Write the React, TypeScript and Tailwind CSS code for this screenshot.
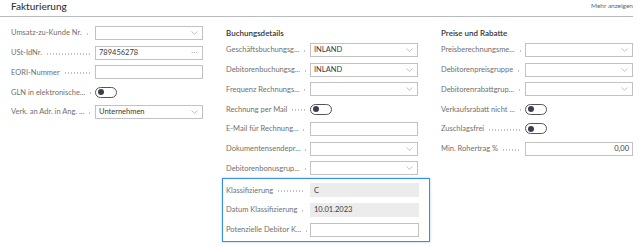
import type { ReactNode } from "react";

type Control =
  | { kind: "select"; value?: string }
  | { kind: "text"; value?: string; align?: "right" }
  | { kind: "lookup"; value: string }
  | { kind: "toggle" }
  | { kind: "readonly"; value: string };

type Field = { label: string; control: Control };

const left: Field[] = [
  { label: "Umsatz-zu-Kunde Nr.", control: { kind: "select" } },
  { label: "USt-IdNr.", control: { kind: "lookup", value: "789456278" } },
  { label: "EORI-Nummer", control: { kind: "text" } },
  { label: "GLN in elektronische...", control: { kind: "toggle" } },
  { label: "Verk. an Adr. in Ang. ...", control: { kind: "select", value: "Unternehmen" } },
];

const middle: Field[] = [
  { label: "Geschäftsbuchungsg...", control: { kind: "select", value: "INLAND" } },
  { label: "Debitorenbuchungsg...", control: { kind: "select", value: "INLAND" } },
  { label: "Frequenz Rechnungs...", control: { kind: "select" } },
  { label: "Rechnung per Mail", control: { kind: "toggle" } },
  { label: "E-Mail für Rechnung...", control: { kind: "text" } },
  { label: "Dokumentensendepr...", control: { kind: "select" } },
  { label: "Debitorenbonusgrup...", control: { kind: "select" } },
];

const highlighted: Field[] = [
  { label: "Klassifizierung", control: { kind: "readonly", value: "C" } },
  { label: "Datum Klassifizierung", control: { kind: "readonly", value: "10.01.2023" } },
  { label: "Potenzielle Debitor K...", control: { kind: "text" } },
];

const right: Field[] = [
  { label: "Preisberechnungsme...", control: { kind: "select" } },
  { label: "Debitorenpreisgruppe", control: { kind: "select" } },
  { label: "Debitorenrabattgrup...", control: { kind: "select" } },
  { label: "Verkaufsrabatt nicht ...", control: { kind: "toggle" } },
  { label: "Zuschlagsfrei", control: { kind: "toggle" } },
  { label: "Min. Rohertrag %", control: { kind: "text", value: "0,00", align: "right" } },
];

function Chevron() {
  return (
    <svg width="7" height="4" viewBox="0 0 7 4" className="shrink-0">
      <path d="M0.5 0.5 L3.5 3.3 L6.5 0.5" fill="none" stroke="#a8a8a8" strokeWidth="0.7" />
    </svg>
  );
}

function Box({ children, className = "" }: { children?: ReactNode; className?: string }) {
  return (
    <div
      className={`w-[109px] h-[14px] border border-[#c2c2c2] bg-white flex items-center px-[3px] text-[7.5px] text-[#3a3a3a] ${className}`}
    >
      {children}
    </div>
  );
}

function ControlView({ control }: { control: Control }) {
  switch (control.kind) {
    case "select":
      return (
        <Box className="justify-between pr-[4px]">
          <span>{control.value ?? ""}</span>
          <Chevron />
        </Box>
      );
    case "lookup":
      return (
        <Box className="justify-between pr-[4px]">
          <span>{control.value}</span>
          <span className="text-[#888] tracking-[0.5px] leading-none -mt-[3px]">...</span>
        </Box>
      );
    case "text":
      return (
        <Box className={control.align === "right" ? "justify-end" : ""}>
          <span>{control.value ?? ""}</span>
        </Box>
      );
    case "readonly":
      return (
        <div className="w-[109px] h-[14px] bg-[#ececec] flex items-center px-[4px] text-[7.5px] text-[#3a3a3a]">
          {control.value}
        </div>
      );
    case "toggle":
      return (
        <div className="w-[22px] h-[11px] rounded-full border border-[#555] flex items-center pl-[2px]">
          <div className="w-[6px] h-[6px] rounded-full bg-[#3a3f4a]" />
        </div>
      );
  }
}

function Row({ field }: { field: Field }) {
  return (
    <div className="h-[19.75px] flex items-center">
      <div className="w-[84px] flex items-center pr-[5px] shrink-0">
        <span className="text-[7.5px] text-[#707070] whitespace-nowrap">{field.label}</span>
        <div className="flex-1 ml-[4px] mt-[2px] h-[2px] min-w-[2px] bg-[radial-gradient(circle,#c4c4c4_35%,transparent_45%)] bg-[length:3px_2px] bg-repeat-x" />
      </div>
      <ControlView control={field.control} />
    </div>
  );
}

function GroupTitle({ children }: { children: ReactNode }) {
  return (
    <div className="h-[17px] flex items-center text-[8px] font-semibold text-[#333] pt-[3px]">
      {children}
    </div>
  );
}

export default function App() {
  return (
    <div
      className="w-[638px] h-[247px] bg-white overflow-hidden"
      style={{ fontFamily: "Lato, 'Open Sans', sans-serif" }}
    >
      {/* Section header */}
      <div className="h-[17px] mr-[5px] border-b border-[#b8bcc2] flex items-center justify-between pl-[11px]">
        <span className="text-[10px] text-[#333] font-medium -mt-[3px]">Fakturierung</span>
        <span className="text-[6.5px] text-[#666] -mt-[4px]">Mehr anzeigen</span>
      </div>

      <div className="grid grid-cols-[192px_192px_192px] gap-x-[23px] pl-[11px] pt-[6px]">
        <div className="flex flex-col">
          {left.map((f) => (
            <Row key={f.label} field={f} />
          ))}
        </div>

        <div className="flex flex-col">
          <GroupTitle>Buchungsdetails</GroupTitle>
          {middle.map((f) => (
            <Row key={f.label} field={f} />
          ))}
          <div className="-ml-[4px] w-[208px] border-[1.5px] border-[#3a8ee6] shadow-[0_0_2px_rgba(58,142,230,0.5)] pl-[3px] pt-[1px] pb-[1px]">
            {highlighted.map((f) => (
              <Row key={f.label} field={f} />
            ))}
          </div>
        </div>

        <div className="flex flex-col">
          <GroupTitle>Preise und Rabatte</GroupTitle>
          {right.map((f) => (
            <Row key={f.label} field={f} />
          ))}
        </div>
      </div>
    </div>
  );
}
